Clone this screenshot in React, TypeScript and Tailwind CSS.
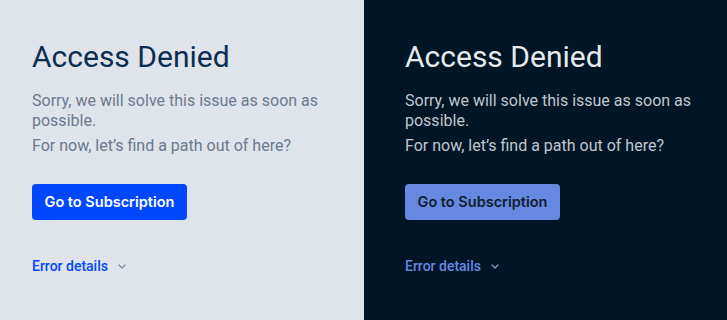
import React from "react";

function Chevron({ className }: { className: string }) {
  return (
    <svg width="8" height="5" viewBox="0 0 8 5" className={className} fill="none">
      <path d="M1 1l3 3 3-3" stroke="currentColor" strokeWidth="1.2" strokeLinecap="round" strokeLinejoin="round" />
    </svg>
  );
}

function Panel({ dark }: { dark: boolean }) {
  return (
    <div
      className={
        dark
          ? "flex-1 bg-[#001526] pl-[41px] pt-[39px] h-[320px]"
          : "w-[364px] bg-[#dfe3ea] pl-[32px] pt-[39px] h-[320px]"
      }
    >
      <h1
        className={
          "text-[30px] leading-[36px] font-normal " +
          (dark ? "text-[#e6eaef]" : "text-[#0c2d52]")
        }
      >
        Access Denied
      </h1>
      <div className={"mt-[16px] text-[16px] leading-[20px] " + (dark ? "text-[#c1c7ce]" : "text-[#6b7a8f]")}>
        <p className="w-[300px]">Sorry, we will solve this issue as soon as possible.</p>
        <p className="mt-[5px]">For now, let’s find a path out of here?</p>
      </div>
      <button
        className={
          "mt-[28px] h-[36px] w-[155px] rounded-[4px] text-[14.5px] font-semibold flex items-center justify-center " +
          (dark ? "bg-[#6688e0] text-[#101d30]" : "bg-[#0047ff] text-white")
        }
        style={{ fontFamily: "Inter, sans-serif" }}
      >
        Go to Subscription
      </button>
      <div
        className={
          "mt-[36px] flex items-center gap-[10px] text-[14px] leading-[20px] font-medium " +
          (dark ? "text-[#6688e0]" : "text-[#0047ff]")
        }
      >
        <span>Error details</span>
        <Chevron className={dark ? "text-[#8aa0c8] mt-[1px]" : "text-[#7a8aa5] mt-[1px]"} />
      </div>
    </div>
  );
}

export default function App() {
  return (
    <div className="flex w-[727px] h-[320px] overflow-hidden" style={{ fontFamily: "Roboto, sans-serif" }}>
      <Panel dark={false} />
      <Panel dark={true} />
    </div>
  );
}
